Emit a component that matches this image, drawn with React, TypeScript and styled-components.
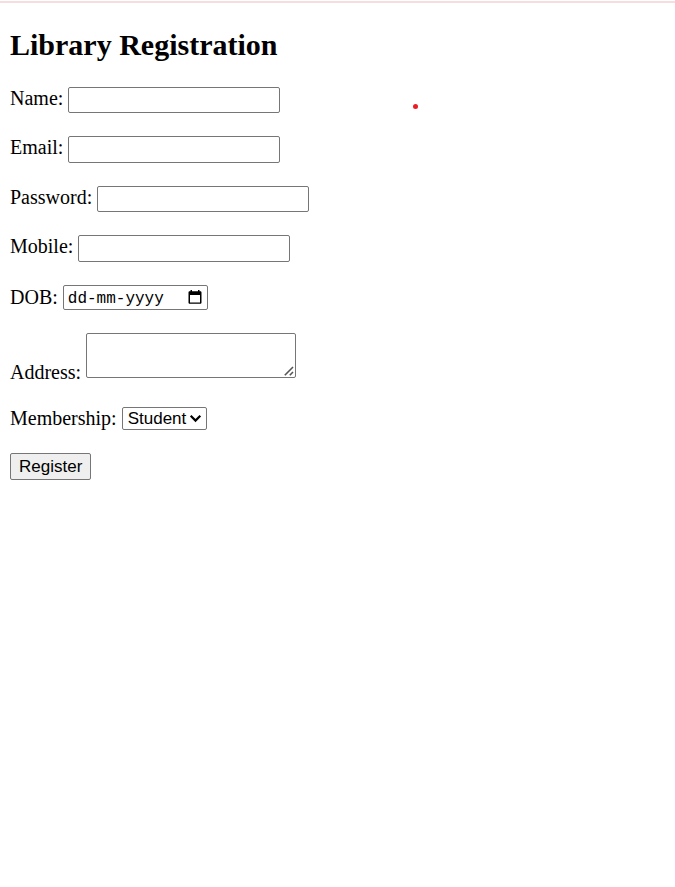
import React from "react";
import styled, { createGlobalStyle, css } from "styled-components";

const GlobalStyle = createGlobalStyle`
  body {
    margin: 0;
    background: #fff;
    color: #000;
    font-family: "Liberation Serif", "Times New Roman", serif;
    font-size: 20px;
  }
`;

const Page = styled.main`
  position: relative;
  border-top: 2px solid #f5dde0;
  margin-top: 1px;
  padding: 24px 10px;
`;

const Title = styled.h2`
  margin: 0 0 24px;
  font-size: 30px;
  line-height: 36px;
  font-weight: bold;
`;

const Form = styled.form`
  display: flex;
  flex-direction: column;
  align-items: flex-start;
  gap: 23px;
`;

const Row = styled.div<{ $align?: "flex-start" | "center" | "flex-end" }>`
  display: flex;
  align-items: ${(p) => p.$align ?? "center"};
  gap: 5px;
`;

const Label = styled.label`
  line-height: 23px;
`;

const box = css`
  box-sizing: border-box;
  margin: 0;
  border: 1px solid #767676;
  border-radius: 2px;
  background: #fff;
  color: #000;
  font-family: "Liberation Sans", Arial, sans-serif;
  font-size: 17px;
`;

const TextInput = styled.input<{ $tall?: boolean }>`
  ${box}
  width: 212px;
  height: ${(p) => (p.$tall ? 27 : 26)}px;
  padding: 1px 3px;
`;

const DateBox = styled.div`
  ${box}
  display: flex;
  align-items: center;
  justify-content: space-between;
  width: 145px;
  height: 25px;
  padding: 0 5px 0 4px;
`;

const DateInput = styled.input`
  width: 108px;
  padding: 2px 0 0;
  border: 0;
  outline: 0;
  background: transparent;
  font-family: "Liberation Mono", monospace;
  font-size: 16px;
  &::placeholder {
    color: #000;
    opacity: 1;
  }
`;

const PickerButton = styled.button`
  display: flex;
  padding: 0;
  border: 0;
  background: none;
  color: #000;
`;

const AddressWrap = styled.div`
  position: relative;
  display: flex;
  margin-bottom: 6px;
`;

const Address = styled.textarea`
  ${box}
  width: 210px;
  height: 45px;
  padding: 2px;
  &::-webkit-resizer {
    background: transparent;
  }
`;

const Grip = styled.svg`
  position: absolute;
  right: 2px;
  bottom: 2px;
  pointer-events: none;
`;

const SelectWrap = styled.div`
  position: relative;
  display: flex;
  align-items: center;
`;

const Select = styled.select`
  ${box}
  appearance: none;
  width: 85px;
  height: 23px;
  padding: 0 18px 0 5px;
`;

const Chevron = styled.svg`
  position: absolute;
  right: 5px;
  pointer-events: none;
`;

const Submit = styled.button`
  ${box}
  height: 27px;
  padding: 0 8px;
  background: #efefef;
`;

const Dot = styled.span`
  position: absolute;
  top: 101px;
  left: 413px;
  width: 5px;
  height: 5px;
  border-radius: 50%;
  background: #ed1c24;
`;

const fields = [
  { id: "name", label: "Name:", type: "text", tall: false },
  { id: "email", label: "Email:", type: "email", tall: true },
  { id: "password", label: "Password:", type: "password", tall: false },
  { id: "mobile", label: "Mobile:", type: "tel", tall: true },
];

export default function App() {
  return (
    <>
      <GlobalStyle />
      <Page>
        <Title>Library Registration</Title>
        <Form onSubmit={(e) => e.preventDefault()}>
          {fields.map((f) => (
            <Row key={f.id} $align="flex-start">
              <Label htmlFor={f.id}>{f.label}</Label>
              <TextInput id={f.id} name={f.id} type={f.type} $tall={f.tall} />
            </Row>
          ))}
          <Row>
            <Label htmlFor="dob">DOB:</Label>
            <DateBox>
              <DateInput id="dob" name="dob" type="text" placeholder="dd-mm-yyyy" />
              <PickerButton type="button" aria-label="Show date picker">
                <svg width="14" height="17" viewBox="0 0 14 17">
                  <path
                    fill="currentColor"
                    fillRule="evenodd"
                    d="M2.5 1H4v1.2h6V1h1.5v1.2h.7c.8 0 1.3.5 1.3 1.3v10c0 .8-.5 1.3-1.3 1.3H1.8c-.8 0-1.3-.5-1.3-1.3v-10c0-.8.5-1.3 1.3-1.3h.7zM2 6v7.5h10V6z"
                  />
                </svg>
              </PickerButton>
            </DateBox>
          </Row>
          <Row $align="flex-end">
            <Label htmlFor="address">Address:</Label>
            <AddressWrap>
              <Address id="address" name="address" />
              <Grip width="10" height="10" viewBox="0 0 10 10" aria-hidden="true">
                <path d="M.8 9.2 9 1M5.8 9.2 9 6" fill="none" stroke="#555" strokeWidth="1.6" />
              </Grip>
            </AddressWrap>
          </Row>
          <Row>
            <Label htmlFor="membership">Membership:</Label>
            <SelectWrap>
              <Select id="membership" name="membership" defaultValue="Student">
                <option>Student</option>
                <option>Faculty</option>
              </Select>
              <Chevron width="13" height="9" viewBox="0 0 13 9" aria-hidden="true">
                <path d="M1.7 1.8 6.5 6.6l4.8-4.8" fill="none" stroke="#000" strokeWidth="2.2" />
              </Chevron>
            </SelectWrap>
          </Row>
          <Submit type="submit">Register</Submit>
        </Form>
        <Dot aria-hidden="true" />
      </Page>
    </>
  );
}
